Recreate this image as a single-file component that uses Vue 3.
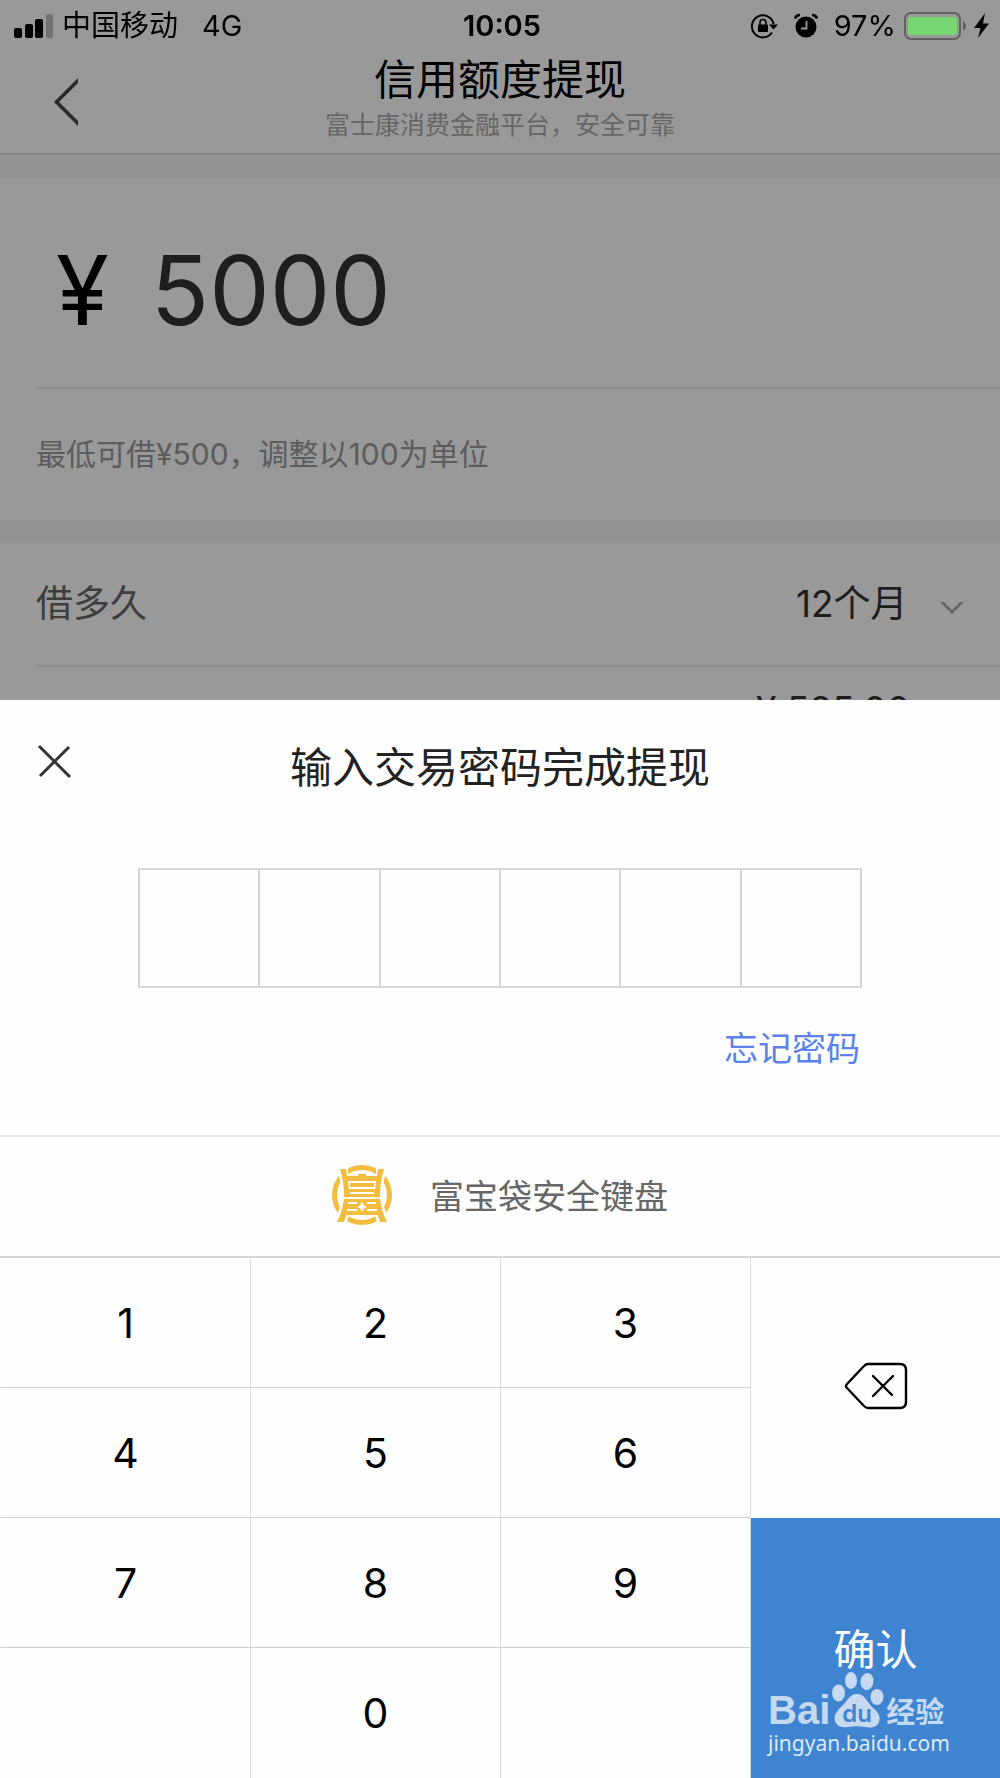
<template>
  <div class="page">
    <!-- Status bar -->
    <header class="status-bar">
      <div class="status-left">
        <svg class="signal" viewBox="0 0 40 24" width="40" height="24">
          <rect x="0" y="14" width="8" height="10" rx="2" />
          <rect x="11" y="10" width="8" height="14" rx="2" />
          <rect x="21" y="5" width="8" height="19" rx="2" />
          <rect x="32" y="0" width="7" height="24" rx="2" fill="#717171" />
        </svg>
        <span>中国移动</span>
        <span class="network">4G</span>
      </div>
      <div class="status-time">10:05</div>
      <div class="status-right">
        <svg class="lock" viewBox="0 0 28 26" width="28" height="26">
          <path d="M22 19.5 A11 11 0 1 1 23.6 11" fill="none" stroke="#000" stroke-width="2" />
          <path d="M19 11.5 H28 L23.5 16.5 Z" />
          <rect x="8" y="11.5" width="10" height="7.5" rx="1" />
          <path d="M10 12 V9.5 A3 3 0 0 1 16 9.5 V12" fill="none" stroke="#000" stroke-width="1.6" />
        </svg>
        <svg class="alarm" viewBox="0 0 24 26" width="24" height="26">
          <circle cx="12" cy="14" r="10.5" />
          <path d="M1 5.5 A5 5 0 0 1 6 2 M23 5.5 A5 5 0 0 0 18 2" fill="none" stroke="#000" stroke-width="2.6" />
          <path d="M12.5 8 V15.5 H7" fill="none" stroke="#999" stroke-width="1.8" />
        </svg>
        <span>97%</span>
        <svg class="battery" viewBox="0 0 64 28" width="64" height="28">
          <rect x="1" y="1" width="55" height="26" rx="6" fill="none" stroke="#616161" stroke-width="2" />
          <rect x="4" y="5" width="49" height="18" rx="3" fill="#76d672" />
          <path d="M59 9 C63 11 63 17 59 19 Z" fill="#616161" />
        </svg>
        <svg class="bolt" viewBox="0 0 16 26" width="16" height="26">
          <path d="M11 0 L0 15 H6.5 L4 25 L15 10.5 H9 Z" />
        </svg>
      </div>
    </header>

    <!-- Navigation -->
    <nav class="nav">
      <button class="back" type="button" aria-label="返回">
        <svg viewBox="0 0 26 48" width="26" height="48">
          <path d="M24 0 V5 L5 24 L24 43 V48 L0 24 Z" />
        </svg>
      </button>
      <div class="nav-text">
        <h1>信用额度提现</h1>
        <p>富士康消费金融平台，安全可靠</p>
      </div>
    </nav>

    <!-- Loan form -->
    <main>
      <section class="card">
        <label class="amount">
          <span class="currency">¥</span>
          <input v-model="amount" type="text" inputmode="numeric" aria-label="提现金额" />
        </label>
        <p class="hint">最低可借¥500，调整以100为单位</p>
      </section>
      <section class="card">
        <div class="row">
          <label for="term">借多久</label>
          <div class="term">
            <select id="term" v-model="term">
              <option v-for="item in terms" :key="item" :value="item">{{ item }}个月</option>
            </select>
            <svg class="chevron" viewBox="0 0 24 14" width="24" height="14">
              <path d="M0 1 H4 L12 9 L20 1 H24 L12 13 Z" />
            </svg>
          </div>
        </div>
        <div class="row repay">
          <span>¥ 585.00</span>
        </div>
      </section>
    </main>

    <div class="mask"></div>

    <!-- Password sheet -->
    <section class="sheet" role="dialog" aria-labelledby="sheet-title">
      <div class="sheet-header">
        <button class="close" type="button" aria-label="关闭">
          <svg viewBox="0 0 36 36" width="36" height="36">
            <path d="M3 3 L34 34 M33 4 L4 33" />
          </svg>
        </button>
        <h2 id="sheet-title">输入交易密码完成提现</h2>
      </div>
      <div class="pin">
        <input
          v-for="n in 6"
          :key="n"
          type="password"
          maxlength="1"
          readonly
          :value="password[n - 1] || ''"
          :aria-label="`密码第${n}位`"
        />
      </div>
      <div class="forgot">
        <a href="#">忘记密码</a>
      </div>

      <div class="brand">
        <svg class="brand-logo" viewBox="0 0 60 60" width="60" height="60">
          <circle cx="30" cy="30" r="27.5" fill="none" stroke="#f3bd40" stroke-width="5" />
          <!-- White gap between the ring and the tower -->
          <path fill="#fff" d="M5 2 H16 V9 H44 V2 H55 L50 24 V36 L58 59 H46 L43 51 H17 L14 59 H2 L10 36 V24 Z" />
          <g fill="#f3bd40">
            <path d="M8 4 H14 Q17 17 17 30 Q17 44 12 57 H5 Q12 43 12 30 Q12 17 8 4 Z" />
            <path d="M52 4 H46 Q43 17 43 30 Q43 44 48 57 H55 Q48 43 48 30 Q48 17 52 4 Z" />
            <path d="M13 11 H26 V9 H34 V11 H47 V16 H13 Z" />
            <rect x="18" y="18" width="24" height="4" />
            <rect x="13" y="24" width="34" height="8" />
            <rect x="13" y="34" width="34" height="16" />
          </g>
          <g fill="none" stroke="#fff" stroke-width="2">
            <path d="M18 28 H42" />
            <path d="M11 33 H49" stroke-width="1.500" />
            <path d="M16 38 H25 M35 38 H44 M15 45 H25 M35 45 H45" />
          </g>
          <path fill="#fff" d="M30 36 Q31 41 35 42 Q31 43 30 47 Q29 43 25 42 Q29 41 30 36 Z" />
        </svg>
        <span>富宝袋安全键盘</span>
      </div>

      <div class="keyboard">
        <div class="digits">
          <button
            v-for="(key, i) in keys"
            :key="i"
            type="button"
            :disabled="key === ''"
            @click="press(key)"
          >
            {{ key }}
          </button>
        </div>
        <div class="actions">
          <button class="delete" type="button" aria-label="删除" @click="remove">
            <svg viewBox="0 0 64 48" width="64" height="48">
              <path d="M24 2 H56 Q62 2 62 8 V40 Q62 46 56 46 H24 Q22 46 20 44 L3 26 Q1 24 3 22 L20 4 Q22 2 24 2 Z" />
              <path d="M29 14 L48 33 M49 14 L29 34" />
            </svg>
          </button>
          <div class="confirm-wrapper">
            <button class="confirm" type="button">确认</button>
            <div class="watermark">
              <div class="watermark-logo">
                <span class="bai">Bai</span>
                <svg viewBox="0 0 52 56" width="52" height="56">
                  <ellipse cx="6.500" cy="21" rx="6.500" ry="8.500" />
                  <ellipse cx="19" cy="8.500" rx="6" ry="8.500" />
                  <ellipse cx="35" cy="9.500" rx="6.500" ry="8.500" transform="rotate(8 35 9.500)" />
                  <ellipse cx="45" cy="25" rx="6.500" ry="8" />
                  <path d="M25 22 C33 22 35 30 40 35 C46 40 49 44 47 50 C45 56 38 56 33 55 C28 54 22 54 17 55 C11 56 5 55 3 49 C1 43 6 38 10 34 C15 30 17 22 25 22 Z" />
                  <text x="25" y="50" text-anchor="middle">du</text>
                </svg>
                <span class="jingyan">经验</span>
              </div>
              <span class="watermark-url">jingyan.baidu.com</span>
            </div>
          </div>
        </div>
      </div>
    </section>
  </div>
</template>

<script setup>
import { ref } from 'vue'

const amount = ref('5000')
const term = ref(12)
const terms = [3, 6, 12]

// Digits typed so far
const password = ref('')

// Empty strings are the blank keys around 0
const keys = ['1', '2', '3', '4', '5', '6', '7', '8', '9', '', '0', '']

function press(key) {
  if (password.value.length < 6) {
    password.value += key
  }
}

function remove() {
  password.value = password.value.slice(0, -1)
}
</script>

<style>
body {
  margin: 0;
  background: #f5f5f5;
}
</style>

<style scoped>
.page {
  min-height: 100vh;
  font-family: Inter, "Noto Sans CJK SC", sans-serif;
  color: #333;
  background: #f5f5f5;
}

.page * {
  box-sizing: border-box;
}

h1,
h2,
p {
  margin: 0;
  font-weight: 400;
}

button,
input,
select {
  margin: 0;
  padding: 0;
  border: 0;
  border-radius: 0;
  background: none;
  font: inherit;
  color: inherit;
  outline: none;
}

svg {
  display: block;
}

/* Status bar stays above the mask */
.status-bar {
  position: relative;
  z-index: 2;
  display: grid;
  grid-template-columns: 1fr auto 1fr;
  align-items: center;
  height: 50px;
  padding: 0 10px 0 14px;
  background: #999;
  color: #000;
  font-size: 29px;
  line-height: 52px;
}

.status-left,
.status-right {
  display: flex;
  align-items: center;
}

.status-left {
  gap: 8px;
}

.network {
  margin-left: 16px;
}

.status-time {
  font-weight: 600;
}

.status-right {
  justify-content: flex-end;
}

.alarm {
  margin: 0 16px;
}

.battery {
  margin: 0 6px 0 8px;
}

.nav {
  display: grid;
  grid-template-columns: 132px 1fr 132px;
  border-bottom: 2px solid #e0e0e0;
  background: #fff;
}

.back {
  display: flex;
  align-items: center;
  padding-left: 54px;
  fill: #444;
}

.nav-text {
  padding: 5px 0 8px;
  text-align: center;
}

.nav-text h1 {
  font-size: 42px;
  line-height: 50px;
  color: #000;
}

.nav-text p {
  font-size: 25px;
  line-height: 40px;
  color: #aaa;
}

.card {
  margin-top: 23px;
  padding-left: 36px;
  background: #fff;
}

.amount {
  display: flex;
  align-items: center;
  gap: 42px;
  padding: 40px 0 25px 20px;
  border-bottom: 2px solid #ececec;
  font-size: 96px;
  line-height: 144px;
}

.amount input {
  flex: 1;
  min-width: 0;
  height: 144px;
}

.currency {
  color: #000;
}

.hint {
  font-size: 30px;
  line-height: 131px;
  color: #999;
}

.row {
  display: flex;
  align-items: center;
  justify-content: space-between;
  padding-right: 36px;
  border-bottom: 2px solid #ececec;
  font-size: 37px;
  line-height: 122px;
}

.row label {
  color: #666;
}

.term {
  display: flex;
  align-items: center;
  gap: 32px;
}

.term select {
  appearance: none;
  height: 60px;
  line-height: 60px;
}

.chevron {
  margin-top: 8px;
  fill: #aaa;
}

.repay {
  justify-content: flex-end;
  padding-right: 90px;
  line-height: 86px;
}

.mask {
  position: fixed;
  inset: 0;
  z-index: 1;
  background: rgba(0, 0, 0, 0.4);
}

.sheet {
  position: fixed;
  right: 0;
  bottom: 0;
  left: 0;
  z-index: 3;
  background: #fefefe;
}

.sheet-header {
  display: grid;
  grid-template-columns: 64px 1fr 64px;
  align-items: start;
  padding: 40px 36px;
}

.close {
  display: flex;
  align-items: center;
  height: 42px;
}

.close path {
  fill: none;
  stroke: #333;
  stroke-width: 3;
}

.sheet-header h2 {
  font-size: 42px;
  line-height: 56px;
  text-align: center;
  color: #222;
}

.pin {
  display: grid;
  grid-template-columns: repeat(6, 1fr);
  margin: 32px 138px 0;
  border: 2px solid #d6d6d6;
  border-left: 0;
}

.pin input {
  width: 100%;
  height: 116px;
  border-left: 2px solid #d6d6d6;
  font-size: 40px;
  text-align: center;
}

.forgot {
  padding: 40px 140px 66px;
  font-size: 34px;
  line-height: 41px;
  text-align: right;
}

.forgot a {
  color: #5a82ea;
  text-decoration: none;
}

.brand {
  display: flex;
  align-items: center;
  justify-content: center;
  gap: 38px;
  height: 121px;
  padding-bottom: 4px;
  border-top: 2px solid #e4e4e4;
  font-size: 34px;
  color: #666;
}

.keyboard {
  display: grid;
  grid-template-columns: 3fr 1fr;
  border-top: 2px solid #d6d6d6;
}

.digits {
  display: grid;
  grid-template-columns: repeat(3, 1fr);
  grid-auto-rows: 130px;
}

.digits button {
  border-bottom: 1px solid #cfcfcf;
  border-left: 1px solid #dcdcdc;
  font-size: 41px;
  color: #000;
}

.digits button:nth-child(3n + 1) {
  border-left-color: transparent;
}

.digits button:nth-last-child(-n + 3) {
  border-bottom: 0;
}

.actions {
  display: grid;
  grid-template-rows: 1fr 1fr;
  border-left: 1px solid #dcdcdc;
}

.delete {
  display: flex;
  align-items: center;
  justify-content: center;
  padding-bottom: 4px;
}

.delete path {
  fill: none;
  stroke: #000;
  stroke-width: 2.4;
  stroke-linecap: round;
}

.confirm-wrapper {
  position: relative;
}

.confirm {
  width: 100%;
  height: 100%;
  padding-bottom: 4px;
  background: #3f84d1;
  color: #fff;
  font-size: 42px;
}

.watermark {
  position: absolute;
  bottom: 20px;
  left: 17px;
  pointer-events: none;
  color: #c5d9f0;
}

.watermark-logo {
  display: flex;
  align-items: flex-end;
  gap: 2px;
}

.watermark-logo svg {
  fill: #c5d9f0;
}

.watermark-logo text {
  font-family: Inter, sans-serif;
  font-size: 24px;
  font-weight: 600;
  fill: #3f84d1;
}

.bai {
  font-family: "Liberation Sans", sans-serif;
  font-size: 40px;
  font-weight: 700;
  line-height: 36px;
}

.jingyan {
  font-family: "Noto Sans CJK SC", sans-serif;
  font-size: 29px;
  font-weight: 700;
  line-height: 36px;
}

.watermark-url {
  display: block;
  font-family: "Noto Sans", sans-serif;
  font-size: 21px;
  line-height: 30px;
  color: #dfe9f5;
}
</style>
